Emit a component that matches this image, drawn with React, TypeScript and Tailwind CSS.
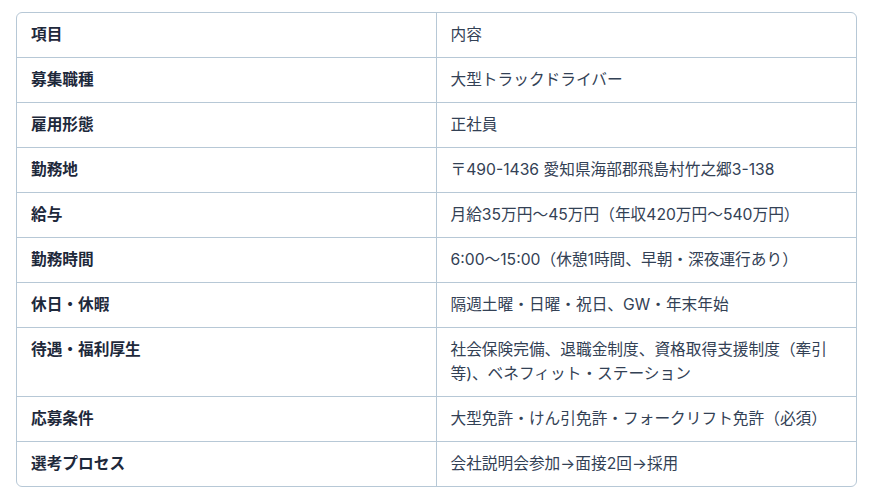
import React from "react";

const rows: [string, string][] = [
  ["項目", "内容"],
  ["募集職種", "大型トラックドライバー"],
  ["雇用形態", "正社員"],
  ["勤務地", "〒490-1436 愛知県海部郡飛島村竹之郷3-138"],
  ["給与", "月給35万円〜45万円（年収420万円〜540万円）"],
  ["勤務時間", "6:00〜15:00（休憩1時間、早朝・深夜運行あり）"],
  ["休日・休暇", "隔週土曜・日曜・祝日、GW・年末年始"],
  ["待遇・福利厚生", "社会保険完備、退職金制度、資格取得支援制度（牽引等)、ベネフィット・ステーション"],
  ["応募条件", "大型免許・けん引免許・フォークリフト免許（必須）"],
  ["選考プロセス", "会社説明会参加→面接2回→採用"],
];

export default function App() {
  return (
    <div
      className="w-[870px] h-[501px] bg-white pt-3 px-4"
      style={{ fontFamily: 'Inter, "Noto Sans CJK JP", "Noto Sans", sans-serif' }}
    >
      <div className="w-[841px] border border-[#b7c8d6] rounded-md overflow-hidden">
        {rows.map(([k, v], i) => (
          <div
            key={i}
            className={`grid grid-cols-2 ${i > 0 ? "border-t border-[#b7c8d6]" : ""}`}
          >
            <div className="px-[14px] py-2.5 text-[15.7px] leading-6 font-bold text-[#1e293b] border-r border-[#b7c8d6]">
              {k}
            </div>
            <div className="px-[14px] py-2.5 text-[15.7px] leading-6 text-[#334155]">{v}</div>
          </div>
        ))}
      </div>
    </div>
  );
}
